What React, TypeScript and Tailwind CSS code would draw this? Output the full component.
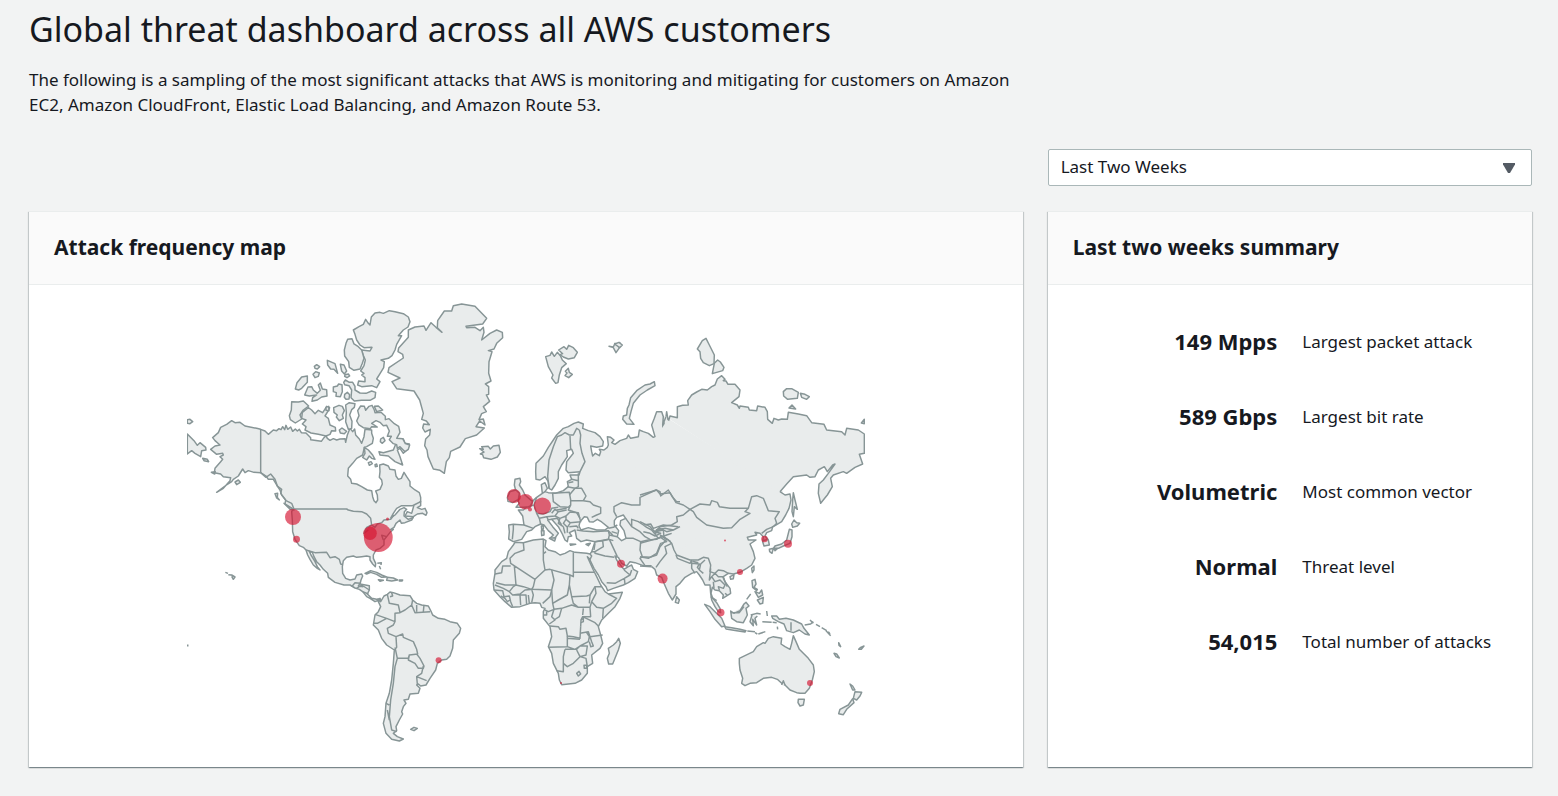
import React from "react";

type Metric = { value: string; label: string };

const metrics: Metric[] = [
  { value: "149 Mpps", label: "Largest packet attack" },
  { value: "589 Gbps", label: "Largest bit rate" },
  { value: "Volumetric", label: "Most common vector" },
  { value: "Normal", label: "Threat level" },
  { value: "54,015", label: "Total number of attacks" },
];

// [cx, cy, radius]
const attacks: [number, number, number][] = [
  [293, 517, 8], [296.5, 539.2, 3.5], [378.3, 537.5, 14.4], [370, 533.3, 6.8], [387.5, 519, 1.5],
  [514, 496, 7], [525.5, 501.8, 7.7], [530, 509.5, 2], [542.4, 506, 8.6], [621, 563.8, 4],
  [662.6, 578.6, 5], [725, 540.5, 1], [764.5, 539, 3.3], [788, 543.8, 4], [740, 572, 3],
  [720.7, 612.6, 3.8], [438.6, 660.2, 3], [810, 683, 3], [561, 683, 1],
];

const arcticCanada = [
  "M520 105L537 95L550 88L557 73L565 85L570 90L574 66L585 54L600 52L610 55L628 47L645 50L670 56L685 66L690 80L684 96L670 105L655 122L665 122L650 148L645 165L636 182L625 190L603 195L613 200L611 218L600 236L590 252L600 260L590 278L575 272L545 275L533 270L536 258L555 260L555 248L545 240L552 235L542 228L552 212L556 195L550 182L545 165L570 168L576 157L552 158L540 150L530 135L525 118Z",
  "M503 133L516 131L522 147L535 155L545 165L552 190L547 205L540 222L522 226L508 217L506 200L494 183L493 165L498 145Z",
  "M442 196L465 206L473 235L462 223L452 222L443 210Z",
  "M481 208L492 210L500 228L493 237L485 228Z",
  "M495 239L505 237L509 243L501 248L494 244Z",
  "M403 214L410 209L419 215L412 222L405 220Z",
  "M399 238L407 230L418 234L415 244L405 248Z",
  "M346 282L351 263L365 246L382 243L382 262L365 280L356 285Z",
  "M374 300L384 276L395 275L400 285L412 295L421 286L415 270L421 264L427 282L440 284L441 303L425 306L412 315L396 319L398 308L410 300L388 303Z",
  "M460 276L472 273L476 267L486 269L487 290L481 305L468 304L469 293L460 290Z",
  "M491 262L496 255L508 262L518 262L525 274L525 285L540 294L558 295L575 288L587 292L585 308L570 316L545 316L523 318L513 308L515 285L507 272L494 269Z",
  "M494 298L502 292L509 299L507 312L498 313L493 307Z",
  "M335 320L355 321L370 318L386 333L370 345L360 360L365 372L346 384L331 374L328 362L334 345Z",
  "M385 338L367 352L365 370L378 375L367 387L378 395L375 405L393 414L415 418L438 423L450 418L455 407L467 408L466 397L450 390L445 370L435 363L445 347L449 338L440 334L434 344L428 353L415 346L405 356L395 345Z",
  "M438 337L446 334L447 347L438 346Z",
  "M461 338L477 331L487 334L493 347L487 360L490 370L478 377L469 366L472 360L462 352Z",
  "M497 330L508 323L525 326L523 337L515 344L509 360L516 379L515 400L505 403L497 380L499 352Z",
  "M478 405L486 399L500 409L493 416L481 414Z",
  "M530 378L537 390L550 398L571 401L575 395L592 396L575 385L588 377L600 382L610 392L620 391L628 408L622 424L634 424L628 434L640 446L650 449L652 460L660 455L675 470L685 463L689 450L676 446L668 431L650 430L660 412L656 394L643 386L627 371L616 374L616 364L603 352L585 353L583 345L576 331L567 334L557 346L553 334L542 333L533 347L537 362Z",
  "M583 334L595 333L608 345L590 350Z",
  "M602 432L610 427L615 437L607 445L601 440Z",
];

const northAmerica = [
  "M242-32L255-27L265-17L280-30L290-28L297-34L303-31L308-40L314-31L318-44L323-32L332-39L338-26L346-33L352-27L358-32L364-22L378-21L392-7L392-1L424 4L432-7L438-13L442-5L450 1L460-4L470 0L480-3L495-4L497 7L502-15L510-35L518-25L524-33L527-15L538-3L545 10L552-10L555-32L575-30L575-20L580-5L577 10L560 20L553 22L548 45L530 55L518 70L505 85L503 108L512 118L515 130L530 132L545 140L562 150L575 152L578 170L582 182L588 188L593 180L592 165L587 153L600 148L607 132L605 120L598 112L600 95L599 75L610 72L625 78L630 88L645 90L648 108L655 118L664 115L672 97L680 110L690 125L690 138L705 150L718 158L722 172L722 185L710 195L695 197L665 197L650 205L640 220L632 234L645 225L660 208L672 203L680 208L673 215L672 228L685 238L700 232L695 240L675 248L664 250L660 240L648 250L642 262L632 268L640 268L632 275L620 290L612 300L612 315L600 325L588 330L580 345L580 355L587 370L586 380L578 372L570 360L570 350L560 348L545 350L530 352L520 348L500 352L490 362L487 380L488 400L497 415L510 420L525 417L530 405L545 402L548 408L543 420L540 432L568 437L568 450L562 462L575 475L590 478L600 475L603 482L598 480L585 485L570 475L560 470L548 455L538 448L525 444L510 435L492 435L465 427L445 412L443 400L430 388L420 375L410 365L402 350L397 337L388 334L393 345L405 365L412 380L420 390L412 385L400 375L390 358L383 345L378 330L370 322L358 317L345 298L338 275L337 240L335 215L340 207L325 200L315 192L317 180L305 165L300 150L290 135L280 118L265 118L258 108L242 98L222 97L205 92L195 98L188 87L175 108L160 118L155 125L135 138L110 157L130 145L150 122L152 113L130 110L122 102L103 98L105 85L122 65L128 58L120 50L130 45L128 40L110 43L92 28L105 18L120 15L105 2L98-7L115-22L122-38L140-47L155-58L165-52L180-53L195-42L230-35Z",
  "M553 22L565 30L578 45L585 58L575 55L568 48L560 60L548 52L555 40Z",
  "M597 35L610 38L640 30L650 5L670-3L675 10L688 12L680 30L670 40L660 25L652 30L660 50L668 75L645 65L625 48L600 45Z",
  "M565 68L573 65L577 71L568 76ZM585 74L590 72L592 79L586 80Z",
  "M22-18L42 2L52 16L60 8L77 22L78 30L65 32L62 50L45 40L35 32L22 42Z",
  "M22-61L30-62L38-55L30-49L22-50Z",
  "M68 55L82 58L86 65L72 62Z M94 97L106 95L104 102Z M165 126L175 120L181 127L170 134Z",
  "M285 161L293 160L292 172L298 180L290 174Z M312 190L328 200L342 210L330 208Z",
  "M702 195L722 185L722 197L712 203L725 208L735 205L741 218L738 226L728 220L712 222L700 230L675 228L682 215L695 220Z",
  "M555 400L572 392L590 397L605 405L620 411L605 412L590 403L572 397L560 402Z",
  "M595 419L610 421L600 424ZM622 412L640 414L653 420L635 423L620 421ZM658 420L668 420L666 423L658 423Z",
  "M592 370L604 368L603 375M598 378L602 388",
  "M136 397L144 400M145 404L155 405L165 411L160 418L155 409",
];

const northAmericaBorders = [
  "M242-32V98L258 112L272 102L285 118L292 138L305 148L302 160L318 182L335 190L342 207H500L505 210L520 214L545 215L560 222L572 235L575 255L585 262L592 252L605 248L612 240L632 238L642 225",
  "M575 255L560 262L552 280L565 270M620 290L605 286L610 300",
  "M378 330L405 338L440 337L450 353L465 350L478 358L482 372L488 374",
  "M515 440L525 428L540 430L535 438L550 440M530 445L545 435L568 450M548 455L565 462",
];

const greenland = [
  "M85 105L105 96L132 93L138 106L153 83L168 97L186 112L172 98L173 77L193 48L215 48L220 32L245 27L285 34L320 70L308 87L258 94L260 98L285 97L300 107L310 97L312 112L305 135L330 115L350 105L367 112L368 128L350 145L342 162L325 167L336 170L327 200L326 235L333 258L316 267L326 275L326 298L319 300L329 319L310 335L319 350L305 356L297 374L310 372L315 390L299 378L288 395L313 399L290 420L256 431L240 456L212 469L208 488L199 500L193 535L180 526L160 522L144 485L141 465L134 452L137 432L149 420L151 403L135 411L128 399L131 387L148 389L139 378L125 373L130 355L119 315L102 288L50 281L36 260L60 249L24 232L27 218L70 189L68 178L54 170L56 159L85 127Z",
  "M299 461L310 463L305 455L325 454L331 462L340 453L357 451L361 472L352 486L333 493L311 488L308 479L301 477L312 471Z",
  "M497 185L510 181L515 171L523 184L532 172L541 182L547 195L559 206L545 218L538 240L534 263L527 265L515 249L519 240L505 215Z",
  "M536 165L552 155L560 163L566 151L580 158L592 172L583 188L565 192L550 186L540 179L548 176Z",
  "M556 229L565 220L568 232L577 238L566 248L555 242L561 234Z",
  "M687 154L700 156L705 145L710 151L720 144L717 160L708 173L700 158Z",
];

const europeCoast =
  "M558 20L552 35L553 55L558 70L555 90L547 112L540 105L545 85L550 70L548 45L550 20L545 5L530 5L523 25L515 45L525 80L520 82L505 70L490 65L478 60L475 80L452 85L445 75L440 85L420 92L405 103L395 98L402 90L392 82L382 80L385 105L382 112L372 120L358 118L362 125L358 137L346 130L338 138L335 125L332 108L350 112L368 108L370 95L360 80L345 68L325 62L308 55L310 42L295 36L282 40L265 50L250 55L230 75L220 90L205 112L190 138L168 160L167 185L168 208L180 210L195 200L205 215L207 235L215 240L225 225L235 205L235 185L245 165L262 140L260 122L275 118L280 130L260 155L258 180L265 188L300 185L297 195L270 195L275 208L262 215L265 230L250 242L225 250L205 248L195 245L202 235L195 218L184 224L187 250L170 262L150 280L140 290L130 300L115 300L128 318L132 345L100 343L86 345L88 365L86 387L100 395L125 388L140 365L155 360L165 350L182 342L192 345L205 362L220 375L210 385L222 388L235 370L218 350L203 330L215 328L235 350L247 372L255 390L262 395L265 380L275 378L268 368L285 360L290 385L303 395L320 390L345 395L340 410L335 425L325 440L342 475L355 495L365 515L378 530L383 542L400 535L430 525L445 518L465 505L473 485L460 478L455 465L445 470L432 478L425 470L410 450L405 438L415 442L425 460L440 468L450 455L465 458L490 467L515 467";

const russiaCoast =
  "M138 260L140 245L145 275L150 258L172 263L172 230L188 226L205 225L203 212L215 195L230 186L245 178L262 180L275 170L285 165L292 147L305 137L315 148L310 152L318 153L324 163L345 163L360 180L357 200L335 218L352 225L358 235L360 228L385 232L388 240L410 242L413 228L435 232L442 245L443 268L457 280L462 265L475 270L485 267L502 268L505 247L535 252L560 257L575 278L612 283L620 300L665 305L675 315L680 295L715 300L733 312V370L718 373L728 402L705 412L680 430L670 425L640 435L632 445L637 470L622 495L614 505L602 520L595 490L597 462L610 450L625 430L645 402L638 405L622 425L613 410L595 420L585 440L570 442L560 435L520 440L500 462L480 485";

const russiaIslands = [
  "M103 155L105 167L82 180L60 195L40 220L33 245L28 265L42 283L20 282L8 268L10 258L20 255L22 235L27 225L32 203L50 182L75 165L90 162Z",
  "M232 57L247 32L258 25L268 45L283 75L282 101L268 107L250 98L242 85L240 65Z",
  "M277 131L283 100L293 90L301 96L312 112L308 122Z",
  "M490 185L500 176L515 176L535 187L532 205L503 208L491 198Z",
  "M541 190L555 193L568 200L560 208L545 202Z",
  "M507 234L516 225L527 237Z",
  "M-16 42L-3 37L7 45L-1 53Z",
  "M724 279L733 268L733 281Z",
];

const europeIslands = [
  "M105 208L120 205L122 215L118 225L128 240L135 255L150 268L158 275L150 290L130 292L108 292L118 280L112 270L118 255L108 245L103 225Z",
  "M82 262L90 245L108 240L118 250L115 268L98 278L84 274Z",
  "M184 348L190 346L190 357L185 360ZM184 362L192 362L192 375L185 377Z",
  "M208 385L227 383L224 393ZM270 402L287 403L272 406ZM318 403L331 400L325 407Z",
];

const europeSeas = [
  "M297 348L300 335L313 320L322 322L328 335L340 336L352 328L365 336L385 352L375 360L350 360L325 353L303 360Z",
  "M410 322L430 315L437 325L422 332L420 345L432 362L438 385L425 392L412 380L416 362L403 345L403 332Z",
];

const europeBorders = [
  "M207 235L203 200L207 150L220 110L232 80L245 75L255 68L268 75L280 75L290 55L298 60M270 78L272 118M298 60L302 75L300 100L306 130L315 155L300 185",
  "M275 208L295 212M295 190V230L285 235L262 230M265 218L280 215M218 250L268 247L272 270V285L265 292L240 290L220 275Z",
  "M268 255L285 235L305 235L318 258L310 272H272M310 272L330 275L340 285L362 292V310L350 315L335 322M272 285L265 300L290 308L300 325",
  "M187 250L195 245M170 262L162 285L170 310L190 312L210 305L215 295L235 292M162 285L145 290M170 310L178 325L200 320L225 318L235 305L260 300",
  "M178 325L182 342M200 320L205 330M258 318L270 306L295 308L302 335L270 338L258 328ZM230 300L260 295M225 318L240 325L258 318M240 325L235 340L250 350M258 328L250 340L262 352L270 340M262 352V368M268 350L290 348L295 355M235 305L225 298L215 310M215 328L232 325L245 345M250 350L255 370",
  "M100 343L100 358L97 388M132 345L160 355M290 360L310 363L340 365L385 362L388 375L385 388L345 395M385 355L400 352L412 345M388 375L412 380M385 362L395 372L400 378M395 365L412 370",
  "M410 320L402 305V290L425 278L455 285L480 285V262L528 240L540 245L542 258L565 240L578 262L590 275L600 275",
  "M437 325L455 350V328L475 335L490 345L500 352L515 360L525 372M455 350L480 365L495 380L510 388M490 345L512 342L520 355L535 350L550 345L595 350M525 372L540 355L560 365L580 360L600 350M525 372L535 385L560 375L575 370",
  "M438 385L460 385L482 395L505 390L530 388L545 378L558 385M482 395L480 420L487 440L480 445L495 467M487 440L510 442L530 435L540 410L560 388L545 378",
  "M345 395L368 392L388 388L412 440M368 392L370 410L345 425L345 430L375 438L403 442M345 400L342 420M345 425L335 425M388 388L400 392",
  "M380 518L405 520L433 505L435 522M433 505L450 495L432 480M450 495L455 480",
];

const asiaCoast =
  "M420 35L435 45L450 42L453 60L447 85L437 105L425 125L405 137L398 140L395 152L380 158L375 168L385 180L388 195L372 198L368 185L370 170L360 160L345 157L350 165L322 172L325 180L348 180L330 192L340 215L345 235L335 255L320 265L300 277L280 282L265 280L250 290L255 305L270 325L272 340L248 355L250 345L238 332L225 330L217 322L213 340L218 355L230 368L240 385L242 398L235 395L225 380L215 360L212 340L210 315L195 315L188 300L178 285L170 275L155 280L135 292L120 310L108 320L108 342L97 360L85 340L70 305L65 292L50 285L45 268L35 260";

const asiaBorders = [
  "M0 45L50 30L60 42L90 38L108 68L130 75L150 88L130 105L110 110L112 125L95 135L60 140L45 155",
  "M150 88L180 72L210 75L215 62L232 67L238 80L270 85L325 85L315 95L330 100L300 118L275 143L250 145L200 135L170 112L160 95Z",
  "M325 85L335 50L350 47L370 55L385 92L418 95L405 115L410 130L400 140L380 148L365 160",
  "M45 155L70 150L72 172L85 180L95 190L102 210L110 225L150 240L175 240L190 232L205 235L212 255L210 275L225 280L235 270L250 272L265 280",
  "M108 225L112 235L150 250L155 240M155 242V265L165 280M155 250L178 252L172 262L180 272M158 244L175 248M195 240L182 252L178 270L190 280",
  "M212 265L208 300L215 290L225 305L240 300L255 315L250 325L235 320L238 330M225 280L235 290L248 290L262 320M215 290L225 280M220 305L222 325",
  "M95 190L75 200L80 220L60 245L48 262M0 190L30 182L62 172L80 185L62 190L50 220L25 235L0 230M40 155L62 160L45 168L30 160L10 155M45 155L30 140L0 125M48 150L75 145L100 150M0 258L35 260",
  "M368 182L385 178M60 165L72 172L92 185M212 350L230 362M255 340L262 345",
];

const asiaIslands = [
  "M110 350L118 360L115 370L106 367Z",
  "M460 38L465 60L472 88L463 80L460 110L456 95L458 60Z",
  "M462 120L470 128L479 130L472 138L458 142L455 132Z",
  "M448 148L456 150L456 170L450 190L430 198L415 205L400 205L405 198L425 192L440 180ZM388 208L400 205L396 220L389 215ZM402 207L412 206L405 212Z",
  "M335 265L342 258L342 270L337 278Z M270 290L282 284L280 296L272 298Z",
  "M336 302L345 298L348 312L342 322L352 328L350 332L338 322ZM345 335L358 340L365 330L368 345L355 352ZM352 360L370 352L368 370L360 372ZM320 358L332 342",
  "M194 373L210 380L225 395L245 415L255 438L245 440L225 418L210 395Z",
  "M254 440L275 443L300 448L318 452L315 456L290 452L258 447ZM322 453L345 455M345 458L352 462M355 462L376 455",
  "M272 393L282 400L300 392L312 372L318 367L327 378L318 385L322 405L310 428L290 425L275 415ZM275 398L298 398L312 380",
  "M332 405L350 400L362 402M336 405L330 425L340 437L338 418L350 435L345 415L352 408M380 393L382 408M367 425L395 427M398 427L410 428M412 440L413 448",
  "M395 408L410 408L418 418L438 415L460 420L485 432L492 445L508 465L495 462L478 450L460 458L440 452L432 432L415 425L398 415Z",
  "M494 435L512 432L520 425M510 420L520 430M528 433L540 440M545 443L560 452M558 452L572 467M565 455L570 462",
];

const africa =
  "M105 67L130 68L160 60L190 57L198 62L195 80L205 90L225 95L240 105L255 100L270 92L285 97L320 100L330 102L335 108L330 118L322 110L340 150L350 170L362 195L375 215L385 222L427 217L420 235L405 260L385 280L365 300L355 320L362 345L368 370L360 385L335 405L338 430L322 440V460L305 480L285 490L245 494L238 480L235 460L220 430L215 400L205 380L215 350L210 320L190 295V275L195 265L185 262L180 250L165 248L150 250L120 260L95 262L75 245L60 230L42 210L40 190L45 160V150L65 125L80 115L85 95L100 75Z";

const africaBorders = [
  "M130 68L132 90L105 100L90 115L92 130L165 178L195 150L190 120V57M45 162L65 158L68 138H92M103 138L108 195L75 195L48 188M280 97V170L270 165L210 148L195 150M280 157H342M198 95L192 100",
  "M165 178L160 200L155 208L215 210L222 180L215 150M270 165L268 195L262 225L235 240L218 250L215 210M268 195L275 230L320 228L330 225L345 200L365 200",
  "M45 195L70 205L88 215L100 200L108 195L130 200L155 208L160 225L155 248M42 210L68 212L72 230L88 228L92 245L98 260M62 228L75 235L82 245L90 240M98 225L120 225L122 255M120 225H138L140 255M145 225L148 250M88 215L98 225L120 222L135 210L160 208",
  "M215 210L210 230L188 250M218 250L222 268L245 265L275 255L295 262H330L335 245L350 262L370 265L395 250L410 235L385 222M275 230L280 250L295 262M330 225L328 250M345 200L348 220L335 245M370 265L368 295M330 262L332 290H308L303 300L302 320",
  "M195 270L205 275L222 268M200 275V285H192M222 268L215 290L225 300L208 312M222 300L238 290L245 265M210 318L235 320L240 328L258 325L262 348L280 350L300 355L302 320M308 290L345 308L355 318M303 300L310 295L310 305L303 308M308 285L310 265",
  "M300 340L325 335L330 350L368 345M262 348V380L205 382M262 380L285 388L300 378L325 365L328 350L320 338M260 355L300 358M330 350L335 365L340 378L332 380L328 365M255 388L290 388L300 378L322 378L318 405L300 410L290 390M255 388L250 410V455L230 452M250 430L262 440L280 430L300 410M300 410L318 415L322 440M312 436L320 435L320 445L313 445ZM290 460L297 454L302 462L295 468Z",
];

const madagascar = "M416 355L421 370L415 390L405 415L398 432L386 432L382 415L388 400L385 385L400 375L410 365Z";

const southAmerica = [
  "M82 118L92 125L102 108L112 103L120 96L130 98L150 105L180 107L188 120L200 130L215 135L235 138L245 158L248 165L265 175L285 178L300 185L322 190L332 205L328 220L310 240L308 265L300 288L290 298L275 300L262 310L257 330L240 355L228 375L212 378L205 372L200 375L210 385L205 400L180 402L175 418L162 420L168 430L160 440L155 455L158 462L148 480L138 500L140 512L130 520L142 530L160 537L148 543L125 538L108 520L100 490L105 470L108 430L118 400L125 360L130 310L133 270L110 255L95 235L85 210L70 195L75 165L85 155L92 140Z",
  "M182 508L192 502L202 505L192 512Z",
];

const southAmericaBorders = [
  "M112 103L118 130L145 135L150 158L135 160V185L110 175L75 163M110 175L82 190L72 190M135 185L130 195L112 205L115 220L138 230L158 222L160 232L190 245L200 268L203 282L178 285L175 295L142 295L135 262M138 230L140 262L133 270M142 295L135 320L130 370L122 420L118 470L125 510L140 515M178 285L175 300L195 310L205 325H220L222 318L210 295L200 282M220 318L215 340L200 350L202 372M200 350L230 362M150 158L165 150L185 135L188 120M185 135L195 158L240 155M200 135L200 155M222 135L220 155M125 98L128 108L120 110M108 430L118 435M112 450L118 480",
];

const oceania = [
  "M148 205L165 197L190 185L200 170L220 158L225 160L235 145L250 140L275 145L273 162L285 170L300 178L305 160L310 137L318 155L328 178L340 190L355 205L370 225L373 245L367 270L358 295L345 310L330 310L320 308L300 300L285 285L275 280L262 268L245 262L220 265L200 278L180 280L165 287L155 280L158 265L150 240L148 220Z",
  "M325 328L343 328L340 345L330 348L324 338Z",
  "M495 305L515 307L510 318L500 330L490 325ZM488 326L492 338L470 358L460 374L446 371L450 358L475 345ZM480 282L488 300L495 300L488 288Z",
  "M432 190L440 192L448 204L438 200ZM446 158L452 170L447 166ZM506 178L512 172L522 168L514 178ZM303 97V122M275 285L280 272L285 285",
];

function Group({ x, y, paths, fill = "#e9ecec" }: { x: number; y: number; paths: string[]; fill?: string }) {
  return (
    <g transform={`translate(${x} ${y}) scale(0.33333)`} fill={fill}>
      {paths.map((d) => (
        <path key={d} d={d} />
      ))}
    </g>
  );
}

function WorldMap() {
  return (
    <svg
      viewBox="187 303 678 440"
      role="img"
      aria-label="Attack frequency map"
      className="mx-auto block w-full max-w-[678px]"
    >
      <g stroke="#879596" strokeWidth="4.4" strokeLinejoin="round">
        <Group x={180} y={440} paths={northAmerica} />
        <Group x={180} y={295} paths={arcticCanada} />
        <Group x={180} y={440} paths={northAmericaBorders} fill="none" />
        <Group x={380} y={295} paths={greenland} />
        <g stroke="none">
          <Group x={480} y={410} paths={["M548 15L910 245L515 472Z"]} />
        </g>
        <Group x={480} y={410} paths={[europeCoast, ...europeIslands]} />
        <Group x={620} y={330} paths={[russiaCoast, ...russiaIslands]} />
        <Group x={640} y={480} paths={[asiaCoast, ...asiaIslands]} />
        <g stroke="none">
          <Group x={480} y={410} paths={["M562 30L885 242L530 455L450 200Z"]} />
        </g>
        <Group x={480} y={410} paths={europeSeas} fill="#fff" />
        <Group x={480} y={410} paths={europeBorders} fill="none" />
        <Group x={640} y={480} paths={asiaBorders} fill="none" />
        <Group x={480} y={520} paths={[africa, madagascar]} />
        <Group x={480} y={520} paths={africaBorders} fill="none" />
        <Group x={350} y={560} paths={southAmerica} />
        <Group x={350} y={560} paths={southAmericaBorders} fill="none" />
        <Group x={690} y={590} paths={oceania} />
      </g>
      <path d="M187 645.5H188.5" stroke="#879596" strokeWidth="2" />
      <g fill="#d5122f" fillOpacity="0.65">
        {attacks.map(([cx, cy, r]) => (
          <circle key={`${cx}-${cy}`} cx={cx} cy={cy} r={r} />
        ))}
      </g>
    </svg>
  );
}

function Card({ title, className = "", children }: { title: string; className?: string; children: React.ReactNode }) {
  return (
    <section
      className={`flex flex-col border-t border-[#eaeded] bg-white shadow-[0_1px_1px_0_rgba(0,28,36,0.3),1px_1px_1px_0_rgba(0,28,36,0.15),-1px_1px_1px_0_rgba(0,28,36,0.15)] ${className}`}
    >
      <header className="border-b border-[#eaeded] bg-[#fafafa] px-[25px] pt-[19px] pb-[21px]">
        <h2 className="text-[21px] leading-8 font-bold">{title}</h2>
      </header>
      {children}
    </section>
  );
}

export default function App() {
  return (
    <main className="min-h-screen bg-[#f2f3f3] pt-2 pr-[26px] pb-7 pl-[29px] font-['Noto_Sans',sans-serif] text-[17px] leading-[25px] text-[#16191f]">
      <h1 className="text-[34px] leading-[43px]">Global threat dashboard across all AWS customers</h1>
      <p className="mt-4 max-w-[994px]">
        The following is a sampling of the most significant attacks that AWS is monitoring and mitigating for customers
        on Amazon EC2, Amazon CloudFront, Elastic Load Balancing, and Amazon Route 53.
      </p>
      <div className="mt-8 grid grid-cols-3 gap-[25px]">
        <div className="relative col-start-3">
          <select
            aria-label="Time range"
            className="block h-[37px] w-full appearance-none rounded-xs border border-[#aab7b8] bg-white px-3 pb-0.5 text-[17px]"
          >
            <option>Last Two Weeks</option>
          </select>
          <svg viewBox="0 0 12 10" className="pointer-events-none absolute top-[14px] right-[17px] h-[10px] w-3" fill="#545b64">
            <path d="M0 0H12V1.5L7 10H5L0 1.5Z" />
          </svg>
        </div>
        <Card title="Attack frequency map" className="col-span-2 col-start-1">
          <div className="px-5 pt-[18px] pb-6">
            <WorldMap />
          </div>
        </Card>
        <Card title="Last two weeks summary">
          <dl className="flex flex-col gap-[50px] pt-11">
            {metrics.map((m) => (
              <div key={m.label} className="grid grid-cols-2 items-center gap-[25px]">
                <dt className="order-2">{m.label}</dt>
                <dd className="text-right text-[22px] font-bold">{m.value}</dd>
              </div>
            ))}
          </dl>
        </Card>
      </div>
    </main>
  );
}
